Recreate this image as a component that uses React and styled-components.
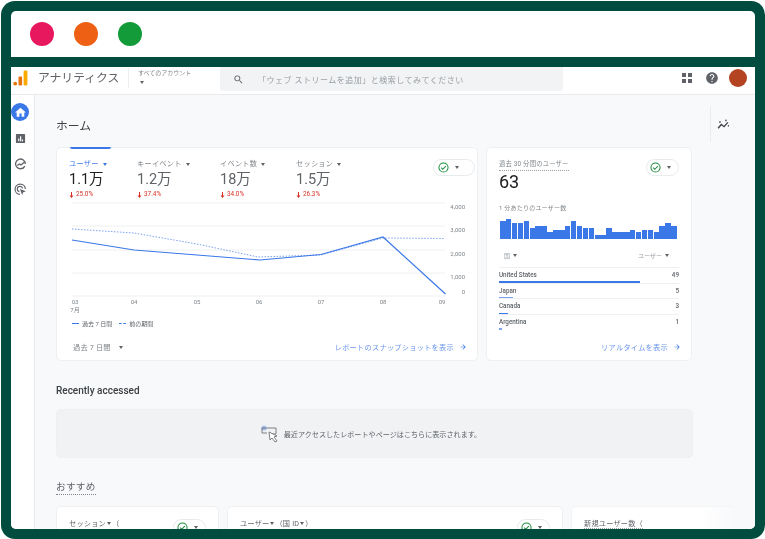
import React from 'react';
import styled, { createGlobalStyle } from 'styled-components';

const GlobalStyle = createGlobalStyle`
  html, body {
    margin: 0;
    padding: 0;
    background: #ffffff;
    overflow: hidden;
  }
  * { box-sizing: border-box; }
  body {
    font-family: Roboto, "Noto Sans CJK JP", "Liberation Sans", sans-serif;
    color: #3c4043;
  }
`;

const Frame = styled.div`
  margin: 1px 0 0 1px;
  width: 764px;
  height: 538px;
  padding: 10px;
  background: #004d40;
  border-radius: 14px;
`;

const Window = styled.div`
  height: 518px;
  background: #ffffff;
  border-radius: 5px;
  overflow: hidden;
  display: flex;
  flex-direction: column;
`;

const TitleBar = styled.div`
  height: 56px;
  flex-shrink: 0;
  display: flex;
  align-items: center;
  gap: 20px;
  padding-left: 19px;
  border-bottom: 10px solid #004d40;
`;

const Dot = styled.span`
  width: 24px;
  height: 24px;
  border-radius: 50%;
  background: ${p => p.$color};
`;

const Header = styled.header`
  height: 28px;
  flex-shrink: 0;
  display: flex;
  border-bottom: 1px solid #e8eaed;
  filter: blur(0.3px);
`;

const Logo = styled.svg`
  width: 15px;
  height: 16px;
  margin: 3px 0 0 2px;
`;

const Brand = styled.div`
  margin: 1px 0 0 10px;
  width: 91px;
  height: 20px;
  font-size: 11.8px;
  line-height: 20px;
  color: #5f6368;
  border-right: 1px solid #eceef0;
`;

const Account = styled.div`
  margin-left: 9px;
  width: 82px;
  font-size: 6px;
  line-height: 9px;
  padding-top: 1px;
  color: #80868b;
`;

const AccountCaret = styled.div`
  padding-left: 2px;
`;

const SearchBox = styled.div`
  width: 343px;
  height: 24px;
  background: #f1f3f4;
  border-radius: 0 0 3px 3px;
  display: flex;
  align-items: center;
  padding-left: 13px;
  gap: 14px;
  font-size: 8px;
  letter-spacing: 0.5px;
  color: #9aa0a6;
`;

const HeaderIcons = styled.div`
  margin-left: auto;
  padding-right: 8px;
  display: flex;
  align-items: center;
  gap: 10px;
  height: 22px;
`;

const HelpIcon = styled.svg`
  width: 14px;
  height: 14px;
  margin-left: 3px;
`;

const Avatar = styled.span`
  width: 18px;
  height: 18px;
  border-radius: 50%;
  background: #b34321;
`;

const Body = styled.div`
  flex: 1;
  min-height: 0;
  display: flex;
  filter: blur(0.3px);
`;

const Sidebar = styled.nav`
  width: 24px;
  flex-shrink: 0;
  background: #ffffff;
  border-right: 1px solid #e8eaed;
  display: flex;
  flex-direction: column;
  padding-top: 8px;
`;

const NavItem = styled.span`
  width: 18px;
  height: 18px;
  border-radius: 50%;
  margin-bottom: ${p => p.$gap}px;
  display: flex;
  align-items: center;
  justify-content: center;
  background: ${p => (p.$active ? '#3b78e7' : 'transparent')};
`;

const Main = styled.main`
  flex: 1;
  min-width: 0;
  overflow: hidden;
  background: #f8f9fb;
  padding: 12px 0 0 21px;
`;

const PageHead = styled.div`
  height: 35px;
  margin-bottom: 5px;
  display: flex;
  align-items: center;
  justify-content: space-between;
`;

const PageTitle = styled.h1`
  margin: 0;
  font-size: 11.8px;
  font-weight: 400;
  color: #3c4043;
`;

const RailButton = styled.div`
  width: 45px;
  height: 35px;
  border-left: 1px solid #eaecef;
  display: flex;
  align-items: center;
  padding-left: 6px;
`;

const TopRow = styled.div`
  display: flex;
  gap: 8px;
`;

const Card = styled.section`
  position: relative;
  width: ${p => p.$w}px;
  height: ${p => p.$h}px;
  flex-shrink: 0;
  background: #ffffff;
  border: 1px solid #eff0f2;
  border-radius: 5px;
  display: flex;
  flex-direction: column;
`;

const TabMark = styled.div`
  position: absolute;
  top: -1px;
  left: 13px;
  width: 41px;
  height: 2px;
  background: #3b78e7;
  border-radius: 0 0 2px 2px;
`;

const MetricRow = styled.div`
  display: flex;
  padding: 11px 0 0 12px;
  height: 52px;
`;

const Metric = styled.div`
  width: ${p => p.$w}px;
  flex-shrink: 0;
`;

const MetricLabel = styled.div`
  display: flex;
  align-items: center;
  gap: 4px;
  font-size: 7.2px;
  line-height: 10px;
  letter-spacing: 0.25px;
  color: ${p => (p.$active ? '#3b78e7' : '#80868b')};
`;

const MetricValue = styled.div`
  font-size: 14.5px;
  line-height: 20px;
  margin-top: 1px;
  color: ${p => (p.$active ? '#202124' : '#5f6368')};
`;

const Delta = styled.div`
  font-size: 6.4px;
  line-height: 9px;
  color: #d93025;
  display: flex;
  align-items: center;
  gap: 2px;
`;

const Caret = styled.span`
  display: inline-block;
  width: 0;
  height: 0;
  border-left: 2.5px solid transparent;
  border-right: 2.5px solid transparent;
  border-top: 3px solid ${p => p.$color || '#5f6368'};
`;

const Pill = styled.div`
  width: 42px;
  height: 17px;
  border: 1px solid #e8eaed;
  border-radius: 9px;
  display: flex;
  align-items: center;
  justify-content: space-between;
  padding: 0 15px 0 4px;
  background: #ffffff;
  flex-shrink: 0;
`;

const MetricPill = styled(Pill)`
  margin-left: 42px;
`;

const ChartSvg = styled.svg`
  display: block;
  flex-shrink: 0;
`;

const Legend = styled.div`
  display: flex;
  align-items: center;
  height: 10px;
  margin: 2px 0 0 15px;
  font-size: 6px;
  color: #5f6368;
  gap: 3px;
`;

const LegendLine = styled.span`
  width: 7px;
  height: 0;
  border-top: 1.5px ${p => (p.$dashed ? 'dashed' : 'solid')} #3b78e7;
`;

const LegendText = styled.span`
  margin-right: ${p => p.$gap || 0}px;
`;

const CardFoot = styled.div`
  margin-top: auto;
  height: 26px;
  padding: 0 10px 0 16px;
  display: flex;
  align-items: center;
  justify-content: space-between;
  font-size: 7.2px;
  color: #80868b;
`;

const RangeSelect = styled.div`
  display: flex;
  align-items: center;
  gap: 8px;
  letter-spacing: 0.2px;
`;

const ReportLink = styled.a`
  margin-left: auto;
  display: flex;
  align-items: center;
  gap: 5px;
  color: #6b96ec;
  letter-spacing: 0.27px;
`;

const RealtimeHead = styled.div`
  display: flex;
  justify-content: space-between;
  padding: 11px 12px 0;
  height: 52px;
`;

const DottedTitle = styled.div`
  font-size: 6.3px;
  line-height: 10px;
  letter-spacing: 0.22px;
  color: #80868b;
  border-bottom: 1px dotted #9aa0a6;
  height: 12px;
`;

const BigNumber = styled.div`
  font-size: 18px;
  line-height: 21px;
  color: #202124;
`;

const RealtimePill = styled(Pill)`
  width: 33px;
  padding: 0 7px 0 3px;
`;

const SubLabel = styled.div`
  padding: 3px 12px 0;
  font-size: 6px;
  line-height: 9px;
  letter-spacing: 0.22px;
  color: #80868b;
`;

const Bars = styled.div`
  margin: 6px 14px 0 13px;
  height: 21px;
  display: flex;
  align-items: flex-end;
  gap: 0.4px;
`;

const Bar = styled.span`
  flex: 1;
  height: ${p => p.$h}px;
  background: #3b78e7;
`;

const TableHead = styled.div`
  margin: 10px 12px 0;
  height: 18px;
  padding: 0 10px 6px 5px;
  display: flex;
  align-items: center;
  justify-content: space-between;
  font-size: 6px;
  color: #9aa0a6;
`;

const HeadCell = styled.span`
  display: flex;
  align-items: center;
  gap: 3px;
`;

const Row = styled.div`
  margin: 0 12px;
  height: 15.7px;
  border-top: 1px solid #eff0f2;
  display: flex;
  flex-direction: column;
`;

const RowText = styled.div`
  display: flex;
  justify-content: space-between;
  height: 13.2px;
  line-height: 15px;
  font-size: 6.3px;
  font-weight: 500;
  color: #5f6368;
`;

const RowBar = styled.span`
  display: block;
  height: 1.5px;
  width: ${p => p.$w}px;
  background: ${p => p.$color || '#3b78e7'};
`;

const SectionTitle = styled.h2`
  margin: 23px 0 11px;
  font-size: 10px;
  line-height: 14px;
  font-weight: 500;
  color: #3c4043;
`;

const EmptyBox = styled.div`
  width: 637px;
  height: 49px;
  padding-right: 7px;
  background: #f1f2f4;
  border: 1px solid #eff0f2;
  border-radius: 5px;
  display: flex;
  align-items: center;
  justify-content: center;
  gap: 4px;
  font-size: 7.1px;
  color: #5f6368;
`;

const Recommend = styled.div`
  width: fit-content;
  margin-top: 21px;
  height: 16px;
  font-size: 9.6px;
  line-height: 15px;
  color: #5f6368;
  border-bottom: 1px dotted #80868b;
  letter-spacing: 0.3px;
`;

const BottomRow = styled.div`
  display: flex;
  gap: 8px;
  margin-top: 11px;
`;

const MiniHead = styled.div`
  display: flex;
  justify-content: space-between;
  padding: 10px 12px 0 12px;
`;

const MiniLabel = styled.span`
  display: flex;
  align-items: center;
  gap: 1px;
  height: 12px;
  font-size: 7.2px;
  letter-spacing: 0.2px;
  color: #5f6368;
  ${p => p.$dotted && 'border-bottom: 1px dotted #9aa0a6;'}
`;

const MiniPill = styled(RealtimePill)`
  margin-top: 2px;
`;

const FadeCard = styled(Card)`
  border-right: none;
  background: linear-gradient(90deg, #ffffff 78%, #f8f9fb 100%);
  border-color: #f3f4f6;
`;

const Check = () => (
  <svg width="11" height="11" viewBox="0 0 24 24" fill="none" stroke="#1e8e3e" strokeWidth="2.2">
    <circle cx="12" cy="12" r="10" />
    <path d="M7 12.5l3.5 3.5L17 9" />
  </svg>
);

const Arrow = () => (
  <svg width="8" height="8" viewBox="0 0 24 24" fill="#3b78e7">
    <path d="M12 4l-1.41 1.41L16.17 11H4v2h12.17l-5.58 5.59L12 20l8-8z" />
  </svg>
);

const Down = () => (
  <svg width="5" height="6" viewBox="0 0 10 12" fill="#d93025">
    <path d="M4 0h2v7h3l-4 5-4-5h3z" />
  </svg>
);

const metrics = [
  { label: 'ユーザー', value: '1.1万', delta: '25.0%', w: 68, active: true },
  { label: 'キーイベント', value: '1.2万', delta: '37.4%', w: 83 },
  { label: 'イベント数', value: '18万', delta: '34.0%', w: 76 },
  { label: 'セッション', value: '1.5万', delta: '26.3%', w: 95 },
];

const gridY = [3, 26, 50, 73, 96];
const yLabels = [['4,000', 9], ['3,000', 32], ['2,000', 56], ['1,000', 79], ['0', 94]];
const xLabels = [['03', 18], ['04', 77], ['05', 140], ['06', 202], ['07', 264], ['08', 326], ['09', 385]];

const barHeights = [18, 20, 16, 16, 18, 11, 13, 13, 7, 9, 9, 13, 18, 13, 11, 11, 4, 4, 11, 7, 7, 7, 9, 7, 9, 9, 7, 13, 16, 13];

const countries = [
  { name: 'United States', count: 49, w: 141 },
  { name: 'Japan', count: 5, w: 14, color: '#7ba3f0' },
  { name: 'Canada', count: 3, w: 9 },
  { name: 'Argentina', count: 1, w: 3, color: '#7ba3f0' },
];

function TrendChart() {
  return (
    <ChartSvg width="420" height="116" viewBox="0 0 420 116">
      {gridY.map(y => (
        <line key={y} x1="15" x2="388" y1={y} y2={y} stroke="#eff0f2" strokeWidth="1" />
      ))}
      <polyline
        points="15,29 77,33 140,44 201,57 264,55 326,38 388,38.5"
        fill="none"
        stroke="#7ba3f0"
        strokeWidth="1"
        strokeDasharray="1.5 1.5"
      />
      <polyline
        points="15,40 77,50 140,55 203,60 264,54.5 326,37 388.5,94"
        fill="none"
        stroke="#3b78e7"
        strokeWidth="1.2"
      />
      {yLabels.map(([t, y]) => (
        <text key={t} x="408" y={y} textAnchor="end" fontSize="6" fill="#80868b">{t}</text>
      ))}
      {xLabels.map(([t, x]) => (
        <text key={t} x={x} y="104" textAnchor="middle" fontSize="6" fill="#80868b">{t}</text>
      ))}
      <text x="18" y="112" textAnchor="middle" fontSize="6" fill="#80868b">7月</text>
    </ChartSvg>
  );
}

export default function App() {
  return (
    <>
      <GlobalStyle />
      <Frame>
        <Window>
          <TitleBar>
            <Dot $color="#e8185e" />
            <Dot $color="#ee6014" />
            <Dot $color="#129b38" />
          </TitleBar>
          <Header>
            <Logo viewBox="0 0 15 16">
              <circle cx="2.2" cy="13.6" r="1.9" fill="#e37400" />
              <rect x="5.5" y="6.5" width="3.6" height="9" rx="1" fill="#e8710a" />
              <rect x="10.6" y="0.5" width="3.8" height="15" rx="1.2" fill="#f9ab00" />
            </Logo>
            <Brand>アナリティクス</Brand>
            <Account>
              すべてのアカウント
              <AccountCaret><Caret /></AccountCaret>
            </Account>
            <SearchBox>
              <svg width="11" height="11" viewBox="0 0 24 24" fill="#5f6368">
                <path d="M15.5 14h-.79l-.28-.27A6.471 6.471 0 0 0 16 9.5 6.5 6.5 0 1 0 9.5 16c1.61 0 3.09-.59 4.23-1.57l.27.28v.79l5 4.99L20.49 19l-4.99-5zm-6 0C7.01 14 5 11.99 5 9.5S7.01 5 9.5 5 14 7.01 14 9.5 11.99 14 9.5 14z" />
              </svg>
              「ウェブ ストリームを追加」と検索してみてください
            </SearchBox>
            <HeaderIcons>
              <svg width="10" height="10" viewBox="0 0 10 10" fill="#5f6368">
                <rect width="4" height="4" />
                <rect x="6" width="4" height="4" />
                <rect y="6" width="4" height="4" />
                <rect x="6" y="6" width="4" height="4" />
              </svg>
              <HelpIcon viewBox="0 0 24 24" fill="#5f6368">
                <path d="M12 2C6.48 2 2 6.48 2 12s4.48 10 10 10 10-4.48 10-10S17.52 2 12 2zm1 17h-2v-2h2v2zm2.07-7.75l-.9.92C13.45 12.9 13 13.5 13 15h-2v-.5c0-1.1.45-2.1 1.17-2.83l1.24-1.26c.37-.36.59-.86.59-1.41 0-1.1-.9-2-2-2s-2 .9-2 2H8c0-2.21 1.79-4 4-4s4 1.79 4 4c0 .88-.36 1.68-.93 2.25z" />
              </HelpIcon>
              <Avatar />
            </HeaderIcons>
          </Header>
          <Body>
            <Sidebar>
              <NavItem $active $gap={8}>
                <svg width="13" height="13" viewBox="0 0 24 24" fill="#ffffff">
                  <path d="M10 20v-6h4v6h5v-8h3L12 3 2 12h3v8z" />
                </svg>
              </NavItem>
              <NavItem $gap={8}>
                <svg width="11" height="11" viewBox="0 0 24 24">
                  <rect x="2" y="2" width="20" height="20" rx="2" fill="#5f6368" />
                  <path d="M7 12h2.5v6H7zM11 7h2.5v11H11zM15 14h2.5v4H15z" fill="#ffffff" />
                </svg>
              </NavItem>
              <NavItem $gap={7}>
                <svg width="13" height="13" viewBox="0 0 24 24" fill="none" stroke="#5f6368" strokeWidth="2.4">
                  <path d="M20 15A9 9 0 1 1 21 11" />
                  <path d="M6 14l4-3 3 2 7-6" />
                </svg>
              </NavItem>
              <NavItem $gap={0}>
                <svg width="13" height="13" viewBox="0 0 24 24" fill="none" stroke="#5f6368" strokeWidth="2.2">
                  <path d="M11 21a9.5 9.5 0 1 1 10-10" />
                  <path d="M10 16a5 5 0 1 1 6-6" />
                  <path d="M11 11l11 4-5 2-2 5z" fill="#5f6368" stroke="none" />
                </svg>
              </NavItem>
            </Sidebar>
            <Main>
              <PageHead>
                <PageTitle>ホーム</PageTitle>
                <RailButton>
                  <svg width="13" height="13" viewBox="0 0 24 24" fill="none" stroke="#3c4043" strokeWidth="2.4">
                    <path d="M2 19l6-7 5 4 7-8" />
                    <path d="M5 9l1-3M16 6l1-3M20 14l2 1" />
                  </svg>
                </RailButton>
              </PageHead>
              <TopRow>
                <Card $w={422} $h={214}>
                  <TabMark />
                  <MetricRow>
                    {metrics.map(m => (
                      <Metric key={m.label} $w={m.w}>
                        <MetricLabel $active={m.active}>
                          {m.label}
                          <Caret $color={m.active ? '#3b78e7' : '#5f6368'} />
                        </MetricLabel>
                        <MetricValue $active={m.active}>{m.value}</MetricValue>
                        <Delta><Down />{m.delta}</Delta>
                      </Metric>
                    ))}
                    <MetricPill><Check /><Caret /></MetricPill>
                  </MetricRow>
                  <TrendChart />
                  <Legend>
                    <LegendLine />
                    <LegendText $gap={4}>過去 7 日間</LegendText>
                    <LegendLine $dashed />
                    <LegendText>前の期間</LegendText>
                  </Legend>
                  <CardFoot>
                    <RangeSelect>過去 7 日間 <Caret /></RangeSelect>
                    <ReportLink>レポートのスナップショットを表示 <Arrow /></ReportLink>
                  </CardFoot>
                </Card>
                <Card $w={206} $h={214}>
                  <RealtimeHead>
                    <div>
                      <DottedTitle>過去 30 分間のユーザー</DottedTitle>
                      <BigNumber>63</BigNumber>
                    </div>
                    <RealtimePill><Check /><Caret /></RealtimePill>
                  </RealtimeHead>
                  <SubLabel>1 分あたりのユーザー数</SubLabel>
                  <Bars>
                    {barHeights.map((h, i) => <Bar key={i} $h={h} />)}
                  </Bars>
                  <TableHead>
                    <HeadCell>国 <Caret /></HeadCell>
                    <HeadCell>ユーザー <Caret /></HeadCell>
                  </TableHead>
                  {countries.map(c => (
                    <Row key={c.name}>
                      <RowText><span>{c.name}</span><span>{c.count}</span></RowText>
                      <RowBar $w={c.w} $color={c.color} />
                    </Row>
                  ))}
                  <CardFoot>
                    <ReportLink>リアルタイムを表示 <Arrow /></ReportLink>
                  </CardFoot>
                </Card>
              </TopRow>
              <SectionTitle>Recently accessed</SectionTitle>
              <EmptyBox>
                <svg width="19" height="18" viewBox="0 0 19 18" fill="none" stroke="#5f6368" strokeWidth="0.8">
                  <circle cx="3" cy="3" r="2.6" fill="#a8c0f0" stroke="none" />
                  <path d="M1 3h14v6H9M1 3v5h5" />
                  <path d="M8 7l8 4-3 1 3 4-2 1-3-4-2 2z" fill="#ffffff" />
                </svg>
                最近アクセスしたレポートやページはこちらに表示されます。
              </EmptyBox>
              <Recommend>おすすめ</Recommend>
              <BottomRow>
                <Card $w={163} $h={60}>
                  <MiniHead>
                    <MiniLabel>セッション<Caret />（</MiniLabel>
                    <MiniPill><Check /><Caret /></MiniPill>
                  </MiniHead>
                </Card>
                <Card $w={336} $h={60}>
                  <MiniHead>
                    <MiniLabel>ユーザー<Caret />（国 ID<Caret />）</MiniLabel>
                    <MiniPill><Check /><Caret /></MiniPill>
                  </MiniHead>
                </Card>
                <FadeCard $w={164} $h={60}>
                  <MiniHead>
                    <MiniLabel $dotted>新規ユーザー数（</MiniLabel>
                  </MiniHead>
                </FadeCard>
              </BottomRow>
            </Main>
          </Body>
        </Window>
      </Frame>
    </>
  );
}
